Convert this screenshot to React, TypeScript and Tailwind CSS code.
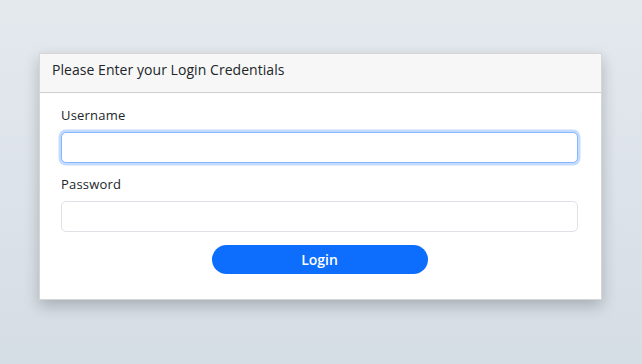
export default function App() {
  const font = { fontFamily: '"Open Sans", "Noto Sans", sans-serif' };

  return (
    <div
      className="min-h-[364px] w-full bg-gradient-to-b from-[#e4e9ee] to-[#d5dde5] pt-[53px]"
      style={font}
    >
      <div className="ml-[39px] w-[563px] border border-[#d6d6d6] bg-white shadow-[0_6px_14px_rgba(0,0,0,0.22)]">
        <div className="h-[39px] border-b border-[#cfcfcf] bg-[#f7f7f7] px-[12px] pt-[6px] text-[14px] leading-[20px] tracking-[0.05px] text-[#212529]">
          Please Enter your Login Credentials
        </div>
        <form className="flex flex-col pl-[21px] pr-[23px] pt-[12px] pb-[25px]">
          <label className="mb-[7px] text-[13px] leading-[20px] tracking-[0.2px] text-[#212529]">Username</label>
          <input
            type="text"
            className="h-[31px] w-full rounded-[5px] border border-[#86b7fe] bg-white px-3 text-sm outline-none shadow-[0_0_0_2.5px_rgba(13,110,253,0.25)]"
          />
          <label className="mt-[11px] mb-[7px] text-[13px] leading-[20px] tracking-[0.2px] text-[#212529]">Password</label>
          <input
            type="password"
            className="h-[31px] w-full rounded-[5px] border border-[#dee2e6] bg-white px-3 text-sm outline-none"
          />
          <button
            type="button"
            className="mx-auto mt-[13px] h-[29px] w-[216px] rounded-full bg-[#0d6efd] text-[14px] font-semibold text-white"
          >
            Login
          </button>
        </form>
      </div>
    </div>
  );
}
